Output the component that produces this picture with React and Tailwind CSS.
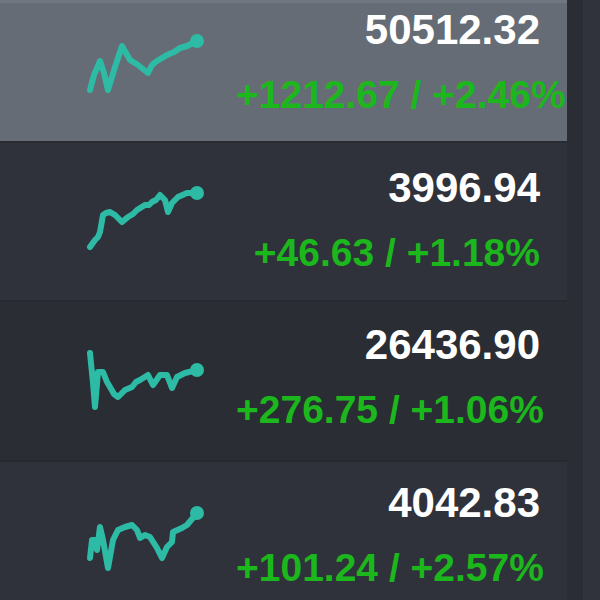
import React from "react";

const ROWS = [
  {
    price: "50512.32",
    change: "+1212.67 / +2.46%",
    h: 143,
    pt: "pt-[6px]",
    bg: "bg-[#656c75]",
    pts: "10,87 14,72 20,58 24,70 28,87 35,64 42,43 46,50 50,57 58,62 68,70 72,62 77,58 82,55 87,52 94,49 100,45 107,43 117,38",
  },
  {
    price: "3996.94",
    change: "+46.63 / +1.18%",
    h: 159,
    pt: "pt-[24px]",
    bg: "bg-[#2f323b]",
    pts: "10,104 15,97 18,94 20,89 23,72 26,70 30,69 35,72 42,79 48,74 53,71 57,67 65,62 69,62 72,59 76,57 80,52 85,57 88,69 92,60 98,54 107,50 117,50",
  },
  {
    price: "26436.90",
    change: "+276.75 / +1.06%",
    h: 160,
    pt: "pt-[22px]",
    bg: "bg-[#2a2d34]",
    pts: "10,51 13,81 15,105 18,70 23,70 27,80 30,85 34,92 38,95 45,88 52,85 56,80 60,78 68,73 73,83 80,73 87,73 92,86 97,75 105,71 117,68",
  },
  {
    price: "4042.83",
    change: "+101.24 / +2.57%",
    h: 160,
    pt: "pt-[20px]",
    bg: "bg-[#2f323b]",
    pts: "10,96 12,78 15,78 17,88 20,65 23,78 28,106 33,78 38,68 45,65 52,63 57,68 60,76 65,73 70,75 77,86 82,96 87,85 92,80 93,70 102,66 107,63 117,51",
  },
];

function Spark({ pts, h }) {
  const last = pts.split(" ").pop().split(",");
  return (
    <svg width="130" height={h} viewBox={`0 0 130 ${h}`} className="shrink-0">
      <polyline
        points={pts}
        fill="none"
        stroke="#2dbba5"
        strokeWidth="6"
        strokeLinejoin="round"
        strokeLinecap="round"
      />
      <circle cx={last[0]} cy={last[1]} r="7" fill="#2dbba5" />
    </svg>
  );
}

export default function App() {
  return (
    <div className="flex w-[600px] h-[600px] overflow-hidden bg-[#2a2d34]" style={{ fontFamily: "'Liberation Sans', Arial, sans-serif" }}>
      <div className="w-[567px] shrink-0 flex flex-col">
        {ROWS.map((r, i) => (
          <div
            key={i}
            className={`flex shrink-0 pl-[80px] border-b-2 border-[#272a30] ${r.bg} ${i === 0 ? "border-t-[3px] border-t-[#6f767f]" : ""}`}
            style={{ height: r.h }}
          >
            <Spark pts={r.pts} h={r.h - 2} />
            <div className="ml-[26px] w-[304px] shrink-0 flex flex-col items-end font-bold whitespace-nowrap">
              <div className={`text-[42px] leading-none text-white ${r.pt}`}>{r.price}</div>
              <div className="text-[39px] leading-none text-[#1cb71c] mt-[24px] self-start w-full text-right">
                <span className="inline-block min-w-full">{r.change}</span>
              </div>
            </div>
          </div>
        ))}
      </div>
      <div className="w-[16px] bg-[#2a2d34]"></div>
      <div className="flex-1 bg-[#30333b]"></div>
    </div>
  );
}
